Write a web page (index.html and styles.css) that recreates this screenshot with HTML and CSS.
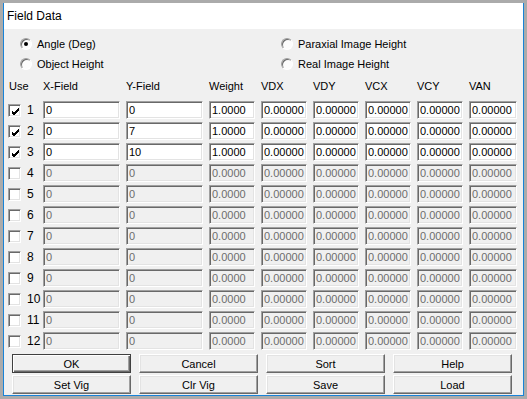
FILE: index.html
```html
<!DOCTYPE html>
<html lang="en">
<head>
  <meta charset="UTF-8" />
  <title>Field Data</title>
  <link rel="stylesheet" href="styles.css">
</head>
<body>
  <div class="window">
    <div class="titlebar">Field Data</div>

    <div class="content">
      <!-- Field type -->
      <div class="options">
        <div class="option"><span class="radio on"></span>Angle (Deg)</div>
        <div class="option"><span class="radio"></span>Paraxial Image Height</div>
        <div class="option"><span class="radio"></span>Object Height</div>
        <div class="option"><span class="radio"></span>Real Image Height</div>
      </div>

      <!-- Field table -->
      <div class="head">
        <span class="use">Use</span>
        <span>X-Field</span>
        <span>Y-Field</span>
        <span>Weight</span>
        <span>VDX</span>
        <span>VDY</span>
        <span>VCX</span>
        <span>VCY</span>
        <span>VAN</span>
      </div>

      <div class="rows" id="rows"></div>

      <div class="buttons">
        <button class="btn default">OK</button>
        <button class="btn">Cancel</button>
        <button class="btn">Sort</button>
        <button class="btn">Help</button>
        <button class="btn">Set Vig</button>
        <button class="btn">Clr Vig</button>
        <button class="btn">Save</button>
        <button class="btn">Load</button>
      </div>
    </div>
  </div>

  <script>
    const yFields = ["0", "7", "10"];
    const tick = '<svg width="9" height="9" viewBox="0 0 9 9"><path d="M1 4 L3 6 L8 1 M1 5 L3 7 L8 2 M1 6 L3 8 L8 3" stroke="#000" stroke-width="1" fill="none" shape-rendering="crispEdges"/></svg>';
    let html = "";
    for (let i = 1; i <= 12; i++) {
      const on = i <= 3;
      const dis = on ? "" : " disabled";
      html += '<div class="row">';
      html += '<span class="check">' + (on ? tick : "") + '</span>';
      html += '<span class="num">' + i + '</span>';
      html += '<input class="field" value="0"' + dis + '>';
      html += '<input class="field" value="' + (on ? yFields[i - 1] : "0") + '"' + dis + '>';
      html += '<input class="field" value="' + (on ? "1.0000" : "0.0000") + '"' + dis + '>';
      for (let k = 0; k < 5; k++) {
        html += '<input class="field" value="0.00000"' + dis + '>';
      }
      html += '</div>';
    }
    document.getElementById("rows").innerHTML = html;
  </script>
</body>
</html>
```

FILE: styles.css
```css
body {
  margin: 0;
  padding: 3px 0 0 3px;
  background: #ababab;
  font-family: "Liberation Sans", Arial, sans-serif;
  font-size: 11px;
  color: #000;
}
.window {
  box-sizing: border-box;
  width: 521px;
  height: 393px;
  background: #f0f0f0;
  border: 1px solid #1883d7;
  border-top: none;
}
.titlebar {
  height: 26px;
  line-height: 26px;
  padding-left: 3px;
  background: #fff;
  font-size: 12px;
}
.content {
  padding: 5px 0 0 4px;
}
.options {
  display: grid;
  grid-template-columns: 261px auto;
  padding-left: 12px;
}
.option {
  display: flex;
  align-items: center;
  gap: 5px;
  height: 20px;
}
.radio {
  position: relative;
  box-sizing: border-box;
  width: 12px;
  height: 12px;
  border-radius: 50%;
  border: 1px solid;
  border-color: #a0a0a0 #fff #fff #a0a0a0;
  box-shadow: inset 1px 1px #696969;
  background: #fcfcfc;
}
.radio.on::after {
  content: "";
  position: absolute;
  left: 3px;
  top: 3px;
  width: 4px;
  height: 4px;
  border-radius: 50%;
  background: #000;
}
.head,
.row {
  display: grid;
  grid-template-columns: 13px 10px 77px 77px 46px 46px 46px 46px 46px 48px;
  column-gap: 6px;
  align-items: center;
}
.head {
  height: 20px;
  margin-top: 2px;
}
.head .use {
  grid-column: span 2;
  padding-left: 1px;
}
.rows {
  display: flex;
  flex-direction: column;
  gap: 3px;
  margin-top: 5px;
}
.row {
  height: 18px;
}
.check {
  box-sizing: border-box;
  width: 13px;
  height: 13px;
  background: #fff;
  border: 1px solid;
  border-color: #a0a0a0 #fff #fff #a0a0a0;
  box-shadow: inset 1px 1px #696969, inset -1px -1px #e3e3e3;
  padding: 1px 0 0 1px;
}
.check svg {
  display: block;
  margin: 1px 0 0 1px;
}
.num {
  white-space: nowrap;
  font-size: 12px;
}
.field {
  box-sizing: border-box;
  width: 100%;
  height: 18px;
  margin: 0;
  padding: 0 0 0 2px;
  font-family: "Liberation Sans", Arial, sans-serif;
  font-size: 11px;
  color: #000;
  background: #fff;
  border: 1px solid;
  border-color: #a0a0a0 #fff #fff #a0a0a0;
  box-shadow: inset 1px 1px #696969, inset -1px -1px #e3e3e3;
  outline: none;
}
.field:disabled {
  background: #f0f0f0;
  color: #6d6d6d;
}
.buttons {
  display: grid;
  grid-template-columns: repeat(4, 119px);
  column-gap: 8px;
  row-gap: 2px;
  margin: 4px 0 0 4px;
}
.btn {
  box-sizing: border-box;
  height: 19px;
  margin: 0;
  padding: 0;
  font-family: "Liberation Sans", Arial, sans-serif;
  font-size: 11px;
  font-weight: normal;
  color: #000;
  background: #f0f0f0;
  border: 1px solid;
  border-color: #fff #696969 #696969 #fff;
  box-shadow: inset -1px -1px #a0a0a0, inset 1px 1px #e3e3e3;
}
.btn.default {
  border-color: #404040;
  box-shadow: inset 1px 1px #fff, inset -1px -1px #696969, inset -2px -2px #a0a0a0;
}
```
